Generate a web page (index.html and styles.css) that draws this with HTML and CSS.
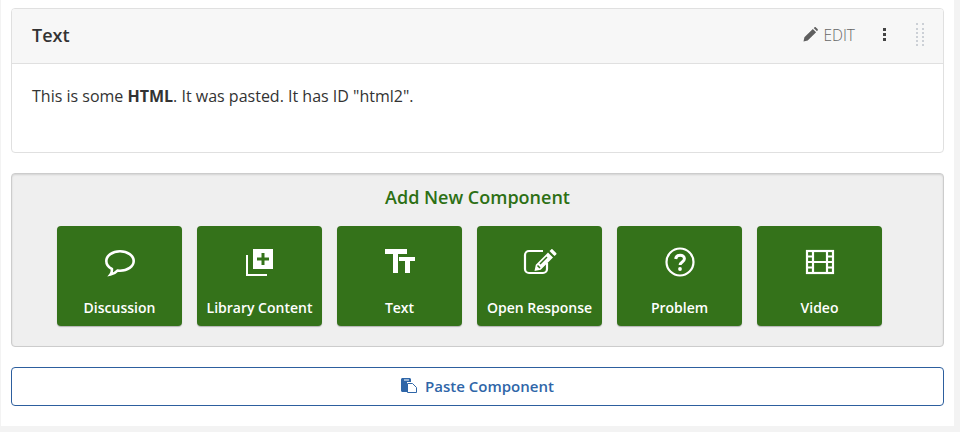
FILE: index.html
```html
<!DOCTYPE html>
<html>
<head>
	<meta charset="utf8">
	<title>Unit components</title>
	<link rel="stylesheet" href="styles.css">
</head>
<body>
	<main class="panel">
		<section class="card">
			<header class="card-head">
				<h2 class="card-title">Text</h2>
				<div class="card-actions">
					<span class="edit">
						<svg class="edit-icon" width="15" height="15" viewBox="0 0 15 15"><path d="M0.500 14.500l0.900-4.200L9.800 1.900l3.300 3.300-8.400 8.400zM10.700 1l0.700-0.600c0.500-0.400 1.100-0.400 1.500 0l1.700 1.700c0.400 0.400 0.400 1 0 1.500L14 4.300z"/></svg>
						EDIT
					</span>
					<span class="more"><i></i><i></i><i></i></span>
					<span class="drag"></span>
				</div>
			</header>
			<div class="card-body">
				<p>This is some <b>HTML</b>. It was pasted. It has ID "html2".</p>
			</div>
		</section>

		<section class="add">
			<h3 class="add-title">Add New Component</h3>
			<div class="add-row">
				<a class="add-btn">
					<svg class="ico" viewBox="0 0 35 32"><path class="line bubble" d="M8.500 28.500c1.200-1.500 1.600-3.200 1.400-5.500C6.400 21.200 4.300 18.300 4.300 15 4.300 9.600 10.400 5.300 18 5.300S31.700 9.600 31.700 15 25.600 24.700 18 24.700c-0.900 0-1.700 0-2.500-0.100-1.800 2-4.300 3.400-7 3.900z"/></svg>
					Discussion
				</a>
				<a class="add-btn">
					<svg class="ico" viewBox="0 0 35 32"><path class="fill" fill-rule="evenodd" d="M11 3h20v20H11zM19.500 7v4.500H15v3h4.500V19h3v-4.500H27v-3h-4.500V7z"/><path class="fill" d="M4 9h2v19h19v2H4z"/></svg>
					Library Content
				</a>
				<a class="add-btn">
					<svg class="ico" viewBox="0 0 35 32"><rect class="fill" x="3" y="3" width="22" height="5"/><rect class="fill" x="11" y="3" width="5" height="24"/><rect class="fill" x="17" y="11" width="16" height="4"/><rect class="fill" x="23" y="11" width="5" height="16"/></svg>
					Text
				</a>
				<a class="add-btn">
					<svg class="ico" viewBox="0 0 35 32"><path class="line" d="M21 5H7a4 4 0 0 0-4 4v14a4 4 0 0 0 4 4h14a4 4 0 0 0 4-4v-6"/><path class="fill" d="M12.500 25l1.300-6.200L26 6.600l5 5L18.700 23.800zM27.500 5.100l1.700-1.700c0.400-0.400 1-0.400 1.400 0l3.600 3.600c0.400 0.400 0.400 1 0 1.400l-1.700 1.700z"/><path class="cut" d="M15.500 19.500l2.500 2.500M18 18l7-7"/></svg>
					Open Response
				</a>
				<a class="add-btn">
					<svg class="ico" viewBox="0 0 35 32"><circle class="line" cx="18" cy="16" r="13.500"/><path class="line thick" d="M13.700 13c0.300-2.500 2.100-3.800 4.400-3.800 2.500 0 4.300 1.500 4.300 3.600 0 3.200-4.300 3-4.300 6.200"/><circle class="fill" cx="18" cy="23" r="1.900"/></svg>
					Problem
				</a>
				<a class="add-btn">
					<svg class="ico" viewBox="0 0 35 32"><rect class="line" x="5" y="5" width="26" height="22"/><path class="line" d="M11 5v22M25 5v22M5 10.500h6M5 16h26M5 21.500h6M25 10.500h6M25 21.500h6"/></svg>
					Video
				</a>
			</div>
		</section>

		<a class="paste">
			<svg class="paste-icon" width="16" height="15" viewBox="0 0 16 15"><path class="paste-back" d="M0 1.500C0 0.700 0.700 0 1.500 0h7C9.300 0 10 0.700 10 1.500V4H6v10H1.500C0.700 14 0 13.300 0 12.500z"/><rect class="paste-clip" x="3" y="1.500" width="5" height="1"/><path class="paste-doc" d="M6.500 5.500h5l4 4v5h-9z"/></svg>
			Paste Component
		</a>
	</main>
</body>
</html>
```

FILE: styles.css
```css
html, body {
	margin: 0;
	padding: 0;
}
body {
	background: #f3f3f3;
	color: #333;
	font-family: "Open Sans", sans-serif;
	font-size: 16px;
}

.panel {
	box-sizing: border-box;
	width: 953px;
	height: 426px;
	margin-left: 1px;
	padding: 8px 10px 0;
	background: #fff;
}

/* Text block */
.card {
	box-sizing: border-box;
	height: 145px;
	border: 1px solid #e0e0e0;
	border-radius: 4px;
	overflow: hidden;
}
.card-head {
	display: flex;
	align-items: center;
	justify-content: space-between;
	box-sizing: border-box;
	height: 55px;
	padding: 0 19px 3px 20px;
	background: #f7f7f7;
	border-bottom: 1px solid #e0e0e0;
}
.card-title {
	margin: 0;
	font-size: 18px;
	font-weight: 600;
}
.card-actions {
	display: flex;
	align-items: center;
	color: #666;
}
.edit {
	display: flex;
	align-items: center;
	gap: 5px;
	font-weight: 300;
	font-size: 15.500px;
}
.edit-icon {
	fill: #5f5f5f;
}
.more {
	display: flex;
	flex-direction: column;
	gap: 2px;
	margin-left: 28px;
}
.more i {
	width: 3px;
	height: 3px;
	background: #444;
}
.drag {
	box-sizing: border-box;
	width: 8px;
	height: 23px;
	margin-left: 30px;
	border-left: 2px dotted #ccd0d6;
	border-right: 2px dotted #ccd0d6;
}
.card-body {
	padding: 0 20px;
}
.card-body p {
	margin: 21px 0 0;
	line-height: 22px;
}

/* Add new component */
.add {
	box-sizing: border-box;
	height: 174px;
	margin-top: 20px;
	padding-top: 12px;
	background: #efefef;
	border: 1px solid #ccc;
	border-radius: 4px;
	box-shadow: inset 0 1px 2px rgba(0, 0, 0, 0.12);
}
.add-title {
	margin: 0;
	color: #2d7014;
	font-size: 18px;
	font-weight: 600;
	line-height: 22px;
	text-align: center;
}
.add-row {
	display: flex;
	gap: 15px;
	margin-top: 18px;
	padding-left: 45px;
}
.add-btn {
	display: flex;
	flex-direction: column;
	align-items: center;
	box-sizing: border-box;
	width: 125px;
	height: 100px;
	padding-top: 20px;
	background: #34721a;
	border-radius: 4px;
	box-shadow: 0 1px 1px rgba(0, 0, 0, 0.25);
	color: #fff;
	font-size: 14px;
	font-weight: 600;
	line-height: 18px;
}
.ico {
	display: block;
	width: 35px;
	height: 32px;
	margin-bottom: 21px;
}
.ico .line {
	fill: none;
	stroke: #fff;
	stroke-width: 2.200;
}
.ico .bubble {
	stroke-width: 2.600;
}
.ico .thick {
	stroke-width: 3;
}
.ico .fill {
	fill: #fff;
}
.ico .cut {
	fill: none;
	stroke: #34721a;
	stroke-width: 1.500;
}

/* Paste */
.paste {
	display: flex;
	align-items: center;
	justify-content: center;
	gap: 8px;
	box-sizing: border-box;
	height: 39px;
	margin-top: 20px;
	padding-bottom: 2px;
	border: 1px solid #2d5f9e;
	border-radius: 4px;
	color: #2f66a8;
	font-size: 15px;
	font-weight: 600;
}
.paste-back {
	fill: #2f66a8;
}
.paste-clip {
	fill: #fff;
}
.paste-doc {
	fill: #fff;
	stroke: #2f66a8;
}
```
